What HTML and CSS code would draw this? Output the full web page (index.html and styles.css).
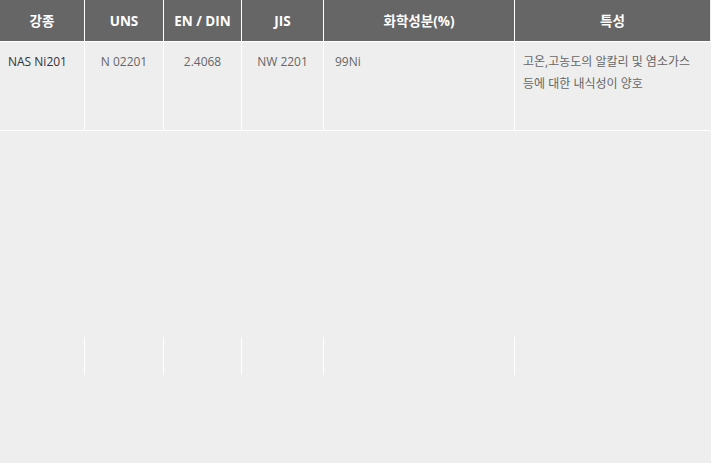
FILE: index.html
```html
<!DOCTYPE html>
<html lang="ko">
<head>
<meta charset="utf-8">
<link rel="stylesheet" href="styles.css">
</head>
<body>
<div class="spec">
  <div class="row head">
    <div class="cell">강종</div>
    <div class="cell">UNS</div>
    <div class="cell">EN / DIN</div>
    <div class="cell">JIS</div>
    <div class="cell">화학성분(%)</div>
    <div class="cell">특성</div>
  </div>
  <div class="row body">
    <div class="cell grade">NAS Ni201</div>
    <div class="cell center">N 02201</div>
    <div class="cell center">2.4068</div>
    <div class="cell center">NW 2201</div>
    <div class="cell chem">99Ni</div>
    <div class="cell feat">고온,고농도의 알칼리 및 염소가스<br>등에 대한 내식성이 양호</div>
  </div>
  <div class="row ghost">
    <div class="cell"></div>
    <div class="cell"></div>
    <div class="cell"></div>
    <div class="cell"></div>
    <div class="cell"></div>
    <div class="cell"></div>
  </div>
</div>
</body>
</html>
```

FILE: styles.css
```css
html, body {
  margin: 0;
  padding: 0;
  background: #eeeeee;
}
body {
  font-family: "Open Sans", "Noto Sans CJK KR", sans-serif;
  width: 711px;
  height: 463px;
  overflow: hidden;
}
.spec {
  width: 710px;
}
.row {
  display: grid;
  grid-template-columns: 85px 79px 78px 82px 191px 195px;
}
.cell {
  box-sizing: border-box;
  border-right: 1px solid #ffffff;
}
.cell:last-child {
  border-right: none;
}
.head .cell {
  height: 42px;
  padding-top: 2px;
  background: #666666;
  border-bottom: 1px solid #ffffff;
  color: #ffffff;
  font-size: 13.5px;
  font-weight: 700;
  line-height: 39px;
  text-align: center;
}
.body .cell {
  height: 89px;
  border-bottom: 1px solid #ffffff;
  padding: 9px 8px 0;
  font-size: 12px;
  line-height: 22px;
  color: #666666;
}
.body .grade {
  color: #333333;
}
.body .center {
  text-align: center;
}
.body .chem {
  padding-left: 11px;
}
.ghost {
  margin-top: 206px;
}
.ghost .cell {
  height: 38px;
}
```
